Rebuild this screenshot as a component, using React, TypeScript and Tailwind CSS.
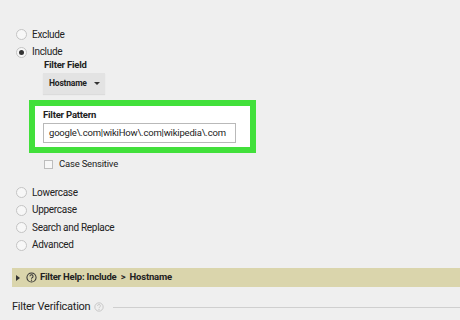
const Radio = ({ checked = false, label }: { checked?: boolean; label: string }) => {
  return (
    <div className="flex h-[17.5px] items-center">
      <span className="flex h-[11px] w-[11px] items-center justify-center rounded-full border border-[#c4c4c4] bg-[#f7f7f7]">
        {checked && <span className="h-[5px] w-[5px] rounded-full bg-[#333]" />}
      </span>
      <span className="ml-[5px] text-[10px] leading-[12px] tracking-[-0.3px] text-[#222]">{label}</span>
    </div>
  );
};

const HelpIcon = ({ className }: { className: string }) => (
  <svg viewBox="0 0 12 12" className={className}>
    <circle cx="6" cy="6" r="5" fill="none" stroke="currentColor" strokeWidth="1.1" />
    <path d="M4.3 4.7a1.7 1.7 0 1 1 2.4 1.5c-.5.3-.7.6-.7 1.1" fill="none" stroke="currentColor" strokeWidth="1.1" />
    <circle cx="6" cy="8.9" r=".7" fill="currentColor" />
  </svg>
);

export default function App() {
  return (
    <div
      className="h-[320px] w-[460px] overflow-hidden bg-[#efefef] text-[#222]"
      style={{ fontFamily: "Roboto, 'Liberation Sans', sans-serif" }}
    >
      <div className="pl-[16px] pt-[26px]">
        <Radio label="Exclude" />
        <Radio checked label="Include" />

        <div className="ml-[28px] mt-[-2px] h-[12px] text-[9.5px] font-bold leading-[12px] tracking-[-0.2px]">Filter Field</div>
        <div className="ml-[27px] mt-[2px] flex h-[21px] w-[62px] items-center justify-between bg-[#e3e3e3] pl-[6px] pr-[5px] shadow-[0_1px_1px_rgba(0,0,0,0.08)]">
          <span className="text-[8.5px] font-bold tracking-[-0.2px]">Hostname</span>
          <span className="h-0 w-0 border-l-[3px] border-r-[3px] border-t-[3px] border-l-transparent border-r-transparent border-t-[#333]" />
        </div>

        <div className="ml-[13px] mt-[6px] h-[53px] w-[227px] border-[6px] border-[#42e03b] bg-white pl-[8px] pt-[2px]">
          <div className="h-[13px] text-[9.5px] font-bold leading-[13px] tracking-[-0.2px]">Filter Pattern</div>
          <div className="mt-[2px] flex h-[20px] w-[193px] items-center border border-[#b9b9b9] bg-white pl-[5px] text-[9.5px] tracking-[-0.2px] text-[#222]">
            google\.com|wikiHow\.com|wikipedia\.com
          </div>
        </div>

        <div className="ml-[28px] mt-[5px] flex h-[12px] items-center">
          <span className="h-[9px] w-[9px] border border-[#bdbdbd] bg-[#f7f7f7]" />
          <span className="ml-[6px] text-[9.5px] tracking-[-0.2px]">Case Sensitive</span>
        </div>

        <div className="mt-[14px] flex flex-col">
          <Radio label="Lowercase" />
          <Radio label="Uppercase" />
          <Radio label="Search and Replace" />
          <Radio label="Advanced" />
        </div>
      </div>

      <div className="ml-[12px] mt-[14px] flex h-[19px] items-center bg-[#dad5ac] pl-[4px]">
        <span className="h-0 w-0 border-b-[3px] border-l-[4px] border-t-[3px] border-b-transparent border-l-[#333] border-t-transparent" />
        <HelpIcon className="ml-[6px] h-[11px] w-[11px] text-[#333]" />
        <span className="ml-[3px] text-[9.5px] font-bold tracking-[-0.2px]">
          Filter Help: Include <span className="mx-[2px]">&gt;</span> Hostname
        </span>
      </div>

      <div className="ml-[12px] mt-[13px] flex h-[14px] items-center">
        <span className="text-[11px] tracking-[-0.25px] text-[#222]">Filter Verification</span>
        <HelpIcon className="ml-[4px] h-[10px] w-[10px] text-[#c4c4c4]" />
        <span className="ml-[9px] h-px flex-1 bg-[#cfcfcf]" />
      </div>
    </div>
  );
}
